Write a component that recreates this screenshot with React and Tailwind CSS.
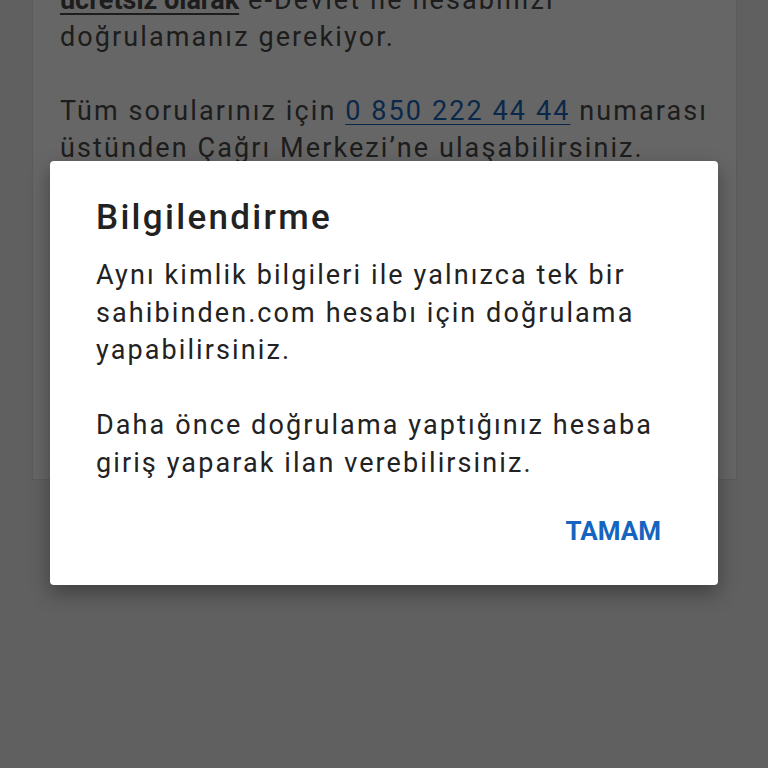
export default function App() {
  const font = { fontFamily: 'Roboto, "Noto Sans", sans-serif' };
  return (
    <div className="relative w-[768px] h-[768px] overflow-hidden bg-[#f0f0f0]" style={font}>
      <div className="ml-[32px] w-[705px] -mt-[19px] h-[499px] bg-white border border-[#e4e4e4] px-[27px] text-[27px] leading-[37px] tracking-[2.1px] text-[#4a4a4a]">
        <p className="whitespace-nowrap">
          <span className="font-bold tracking-normal underline decoration-2 underline-offset-4">ücretsiz olarak</span> e-Devlet ile hesabınızı
          <br />
          doğrulamanız gerekiyor.
        </p>
        <p className="mt-[37px] whitespace-nowrap">
          Tüm sorularınız için <span className="text-[#1a66b8] underline decoration-1 underline-offset-4">0 850 222 44 44</span> numarası
          <br />
          üstünden Çağrı Merkezi’ne ulaşabilirsiniz.
        </p>
      </div>
      <div className="absolute inset-0 bg-black/60 flex justify-center items-start">
        <div className="mt-[161px] w-[668px] h-[424px] bg-white rounded-[4px] shadow-[0_8px_20px_rgba(0,0,0,0.35)] pt-[37px] pl-[46px] pr-[57px] flex flex-col">
          <h2 className="text-[35px] leading-[40px] font-medium tracking-[2.3px] text-[#222]">Bilgilendirme</h2>
          <div className="mt-[19px] text-[27px] leading-[37.5px] tracking-[2.1px] text-[#222] whitespace-nowrap">
            <p>
              Aynı kimlik bilgileri ile yalnızca tek bir
              <br />
              sahibinden.com hesabı için doğrulama
              <br />
              yapabilirsiniz.
            </p>
            <p className="mt-[37.5px]">
              Daha önce doğrulama yaptığınız hesaba
              <br />
              giriş yaparak ilan verebilirsiniz.
            </p>
          </div>
          <div className="mt-[33px] flex justify-end">
            <button className="text-[26px] leading-[32px] font-bold text-[#1565c0]">TAMAM</button>
          </div>
        </div>
      </div>
    </div>
  );
}
